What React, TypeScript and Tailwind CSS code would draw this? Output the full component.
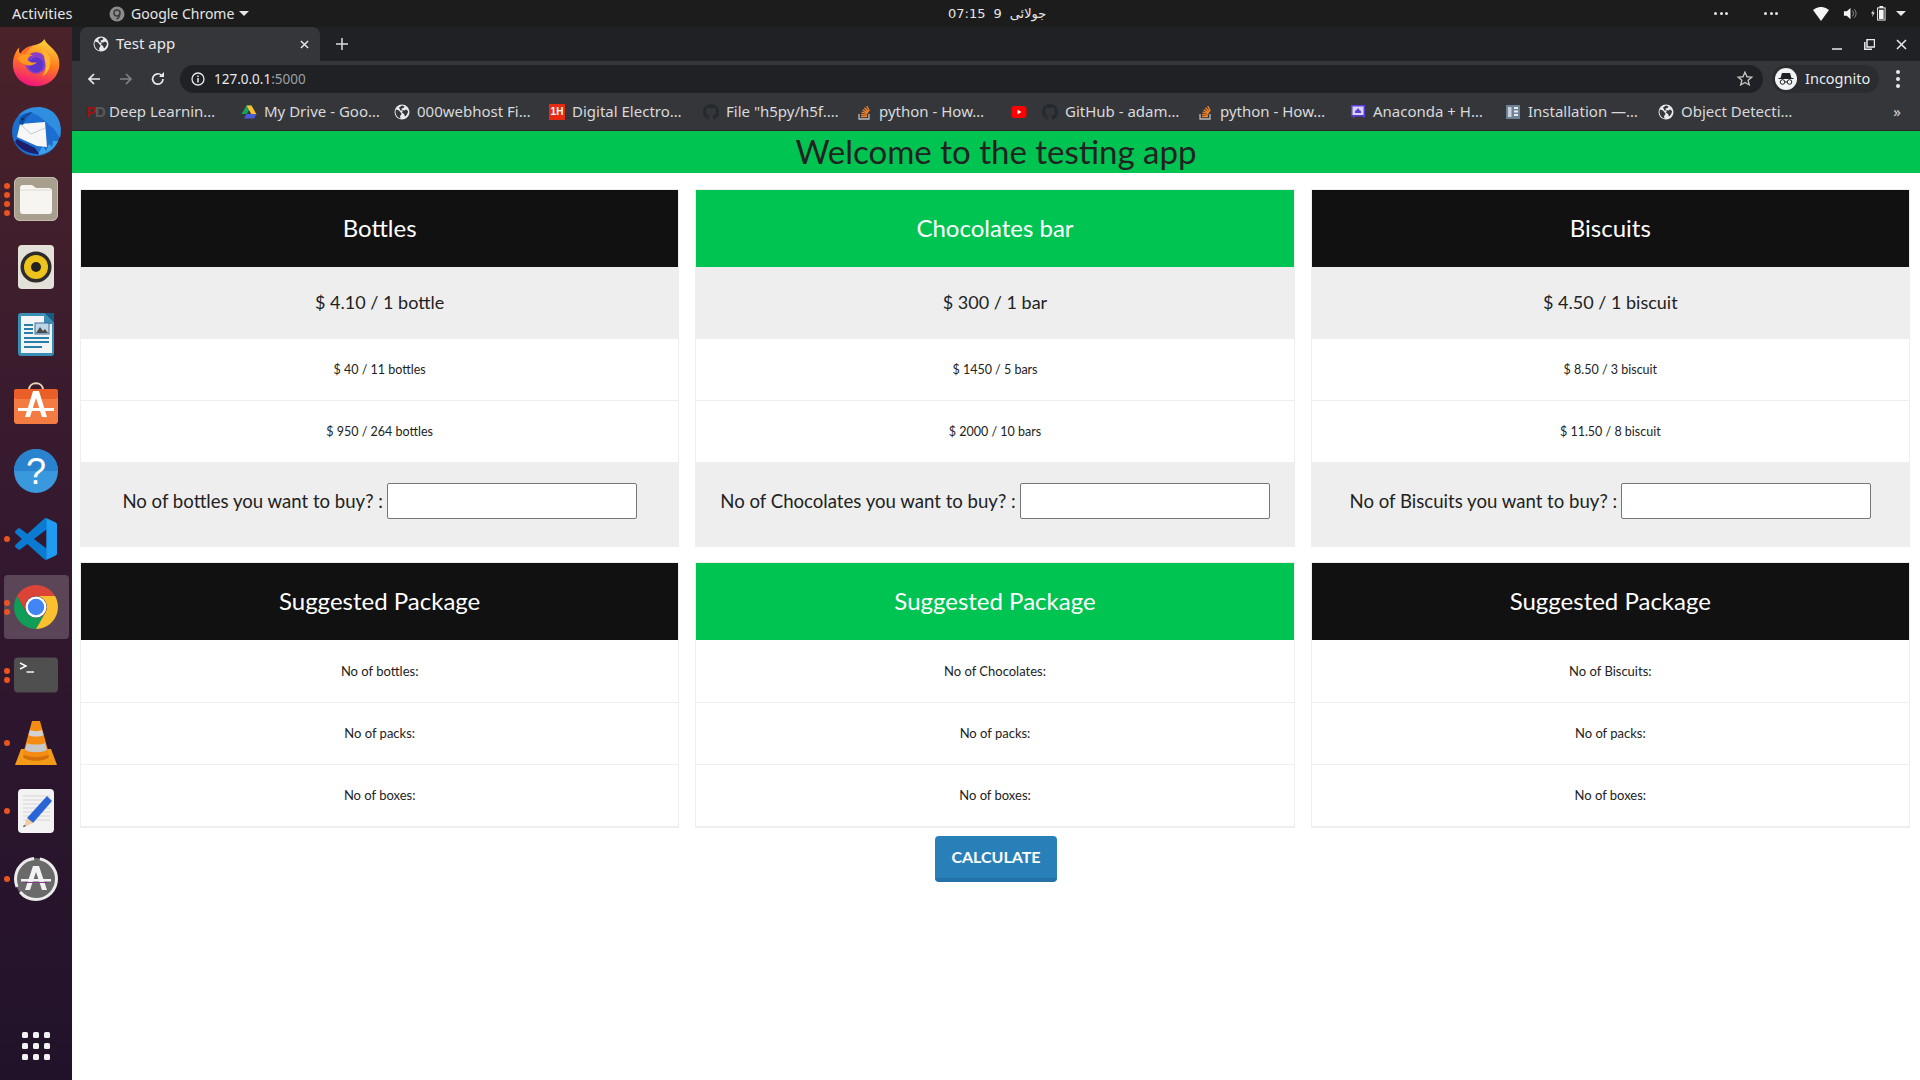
import React from "react";

const Dot = () => <span className="w-[6px] h-[6px] rounded-full bg-[#e95420]" />;

const Firefox = () => (
  <svg viewBox="0 0 54 54" className="w-[50px] h-[50px]">
    <defs>
      <linearGradient id="ff" x1="0.7" y1="0" x2="0.4" y2="1"><stop offset="0" stopColor="#ffd83a" /><stop offset="0.5" stopColor="#ff7a1f" /><stop offset="1" stopColor="#f2127f" /></linearGradient>
    </defs>
    <path d="M36 1c2 6 10 9 14 17 3 6 3 14 0 20-4 9-13 14-23 14C12 52 2 41 2 28 2 21 5 14 9 10c-1 4 0 6 1 7 3-5 8-8 14-9 5-1 10-3 12-7z" fill="url(#ff)" />
    <circle cx="27" cy="27" r="11.500" fill="#8a3fc8" />
    <circle cx="27" cy="29" r="8" fill="#5b35c8" />
    <path d="M7 22c4-5 12-6 17-3-3 0-6 2-6 5 2 3 8 3 10 2-2 3-8 5-12 3-4-1-7-4-9-7z" fill="#ff9a1f" />
    <path d="M33 12c7 3 11 11 9 18-1 6-5 10-9 12 4-4 5-10 4-15-1-6-2-11-4-15z" fill="#ffb62e" />
    <path d="M10 17c3-5 8-8 14-9-4 3-7 6-8 9z" fill="#ff6a2a" />
  </svg>
);
const Thunderbird = () => (
  <svg viewBox="0 0 54 54" className="w-[54px] h-[54px]">
    <circle cx="27" cy="28" r="24" fill="#1c6fd0" />
    <path d="M9 12c9-11 28-12 37-2 6 7 7 16 5 24l-6-9-15-13c-8-5-15-3-21 0z" fill="#2f8ee0" />
    <path d="M6 38c5 8 14 12 24 12l-4-6-18-9z" fill="#1d1f6a" />
    <path d="M30 48l4-6 3 5 3-7 3 3 1-6 5 0c-3 7-9 12-19 14z" fill="#3f9fe8" />
    <path d="M11 20l25-2 2 25-10-1-20-9z" fill="#f7f7f7" />
    <path d="M11 20l11 10 14-6" fill="none" stroke="#b9c0cc" strokeWidth="0.800" />
    <path d="M10 20c0-7 6-12 14-12l-7 6-3 7z" fill="#0f4f9e" />
    <circle cx="13.500" cy="15" r="1.200" fill="#082a5a" />
  </svg>
);
const Files = () => (
  <svg viewBox="0 0 54 54" className="w-[54px] h-[54px]">
    <rect x="5" y="5" width="44" height="44" rx="6" fill="#a89f8e" />
    <rect x="5.500" y="5.500" width="43" height="43" rx="5.500" fill="none" stroke="#c2bcae" />
    <path d="M11 16a3 3 0 0 1 3-3h9l4 3h13a3 3 0 0 1 3 3v20a3 3 0 0 1-3 3H14a3 3 0 0 1-3-3z" fill="#f6f5f2" />
    <path d="M11 18h32" stroke="#dedbd4" strokeWidth="1" />
  </svg>
);
const Rhythmbox = () => (
  <svg viewBox="0 0 54 54" className="w-[54px] h-[54px]">
    <rect x="9" y="5" width="36" height="44" rx="4" fill="#e4e1d8" />
    <circle cx="27" cy="27" r="15.500" fill="#2d2b2c" />
    <circle cx="27" cy="27" r="12" fill="#ecc41c" />
    <circle cx="27" cy="27" r="5" fill="#242221" />
  </svg>
);
const Writer = () => (
  <svg viewBox="0 0 54 54" className="w-[54px] h-[54px]">
    <path d="M12 5h24l9 9v31a3 3 0 0 1-3 3H12a3 3 0 0 1-3-3V8a3 3 0 0 1 3-3z" fill="#3a8db5" />
    <path d="M12 8h23v8h8v29H12z" fill="#f2f4f5" />
    <path d="M36 5h9v9z" fill="#175c85" />
    <path d="M15 16h9v2h-9zM15 20h9v2h-9zM15 24h9v2h-9zM15 29h25v2H15zM15 33h25v2H15zM15 38h18v2H15z" fill="#2a7fa8" />
    <rect x="26" y="15" width="14" height="11" fill="#bcd6e6" stroke="#3a6d99" strokeWidth="1" />
    <path d="M27 25l4-6 3 4 2-2 3 4z" fill="#4a4a4a" />
  </svg>
);
const Software = () => (
  <svg viewBox="0 0 54 54" className="w-[54px] h-[54px]">
    <path d="M20 14c0-9 14-9 14 0" fill="none" stroke="#e8d6b8" strokeWidth="2" />
    <rect x="5" y="13" width="44" height="35" rx="3" fill="#f47b42" />
    <rect x="5" y="13" width="44" height="10" rx="3" fill="#ea5e27" />
    <path d="M24 15h6l8 26h-5l-6-19-6 19h-5z" fill="#ffffff" />
    <path d="M9 32h36v3H9z" fill="#ffffff" />
  </svg>
);
const Help = () => (
  <svg viewBox="0 0 54 54" className="w-[54px] h-[54px]">
    <circle cx="27" cy="27" r="22" fill="#3a98dd" />
    <path d="M5 27a22 22 0 0 1 44 0z" fill="#2a83cf" />
    <text x="27" y="40" textAnchor="middle" fill="#fff" fontSize="36" fontFamily="'Liberation Sans',sans-serif">?</text>
  </svg>
);
const VSCode = () => (
  <svg viewBox="0 0 100 100" className="w-[42px] h-[42px]">
    <path d="M96.500 10.800L75.900.9c-2.400-1.200-5.200-.7-7.100 1.200L29.400 38 12.200 25c-1.600-1.200-3.800-1.100-5.300.2L1.400 30.300c-1.800 1.600-1.800 4.500 0 6.100L16.300 50 1.400 63.600c-1.800 1.600-1.800 4.500 0 6.100l5.500 5c1.500 1.400 3.700 1.500 5.300.3l17.200-13.100 39.400 35.900c1.900 1.900 4.800 2.400 7.100 1.200l20.600-9.900c2.200-1 3.500-3.100 3.500-5.400V16.200c0-2.300-1.300-4.400-3.500-5.400zM75 72.700L45.100 50 75 27.300z" fill="#0a7bd0" />
    <path d="M75 .6L96.500 10.800Q100 12.500 100 16.200V83.800Q100 87.500 96.500 89.200L75 99.400z" fill="#1f9cf0" />
  </svg>
);
const ChromeIcon = () => (
  <svg viewBox="0 0 54 54" className="w-[54px] h-[54px]">
    <path d="M8 16A22 22 0 0 1 46 16H27A11 11 0 0 0 17.500 32.500Z" fill="#db4437" />
    <path d="M8 16A22 22 0 0 0 27 49L36.500 32.500A11 11 0 0 1 17.500 32.500Z" fill="#0f9d58" />
    <path d="M27 49A22 22 0 0 0 46 16H27A11 11 0 0 1 36.500 32.500Z" fill="#fbc02d" />
    <circle cx="27" cy="27" r="10.500" fill="#fff" />
    <circle cx="27" cy="27" r="8.200" fill="#4285f4" />
  </svg>
);
const Terminal = () => (
  <svg viewBox="0 0 54 54" className="w-[54px] h-[54px]">
    <rect x="5" y="9.500" width="44" height="35" rx="4" fill="#4f4f4f" />
    <path d="M11 15l6 3-6 3" fill="none" stroke="#fff" strokeWidth="1.400" />
    <path d="M17.500 24h7.500" stroke="#fff" strokeWidth="1.400" />
  </svg>
);
const VLC = () => (
  <svg viewBox="0 0 54 54" className="w-[54px] h-[54px]">
    <path d="M6 49l6-16h30l6 16z" fill="#f39b16" />
    <path d="M14 41c4 5 22 5 26 0l-3-8H17z" fill="#d66e0a" />
    <path d="M23 5h8l9 33c-4 4-22 4-26 0z" fill="#f48c13" />
    <path d="M21 14c3 1.500 9 1.500 12 0l1.500 5c-4 2-11 2-15 0z" fill="#d2d2d2" />
    <path d="M18 27c4 2 14 2 18 0l2 7c-5 3-17 3-22 0z" fill="#c7c7c7" />
  </svg>
);
const Editor = () => (
  <svg viewBox="0 0 54 54" className="w-[54px] h-[54px]">
    <rect x="9" y="5" width="36" height="44" rx="4" fill="#f3f3f3" />
    <path d="M14 12h27M14 16h27M14 20h27M14 24h27M14 28h27M14 32h27M14 36h27" stroke="#d5d5d5" strokeWidth="1" />
    <path d="M38 12l5 5-19 22-6-5z" fill="#2a65d8" />
    <path d="M18 34l6 5-9 4z" fill="#f0c9a5" />
    <path d="M15 41l2 1-3 1z" fill="#333" />
  </svg>
);
const Updater = () => (
  <svg viewBox="0 0 54 54" className="w-[54px] h-[54px]">
    <circle cx="27" cy="27" r="21" fill="#6a6a6a" />
    <circle cx="27" cy="27" r="20.500" fill="none" stroke="#ececec" strokeWidth="3" strokeDasharray="50 6 38 6" />
    <path d="M24 14h6l8 24h-5l-6-18-6 18h-5z" fill="#f2f2f2" />
    <path d="M12 27h30v2.500H12z" fill="#f2f2f2" />
    <path d="M14 30h26v1H14z" fill="#7c3a8a" />
  </svg>
);
const Grid = () => (
  <svg viewBox="0 0 32 32" className="w-[32px] h-[32px]">
    {[3, 14, 25].map((y) => [3, 14, 25].map((x) => <rect key={`${x}-${y}`} x={x - 1} y={y - 1} width="6" height="6" rx="1.500" fill="#f2f2f2" />))}
  </svg>
);

const dock = [
  { icon: <Firefox />, dots: 0 },
  { icon: <Thunderbird />, dots: 0 },
  { icon: <Files />, dots: 4 },
  { icon: <Rhythmbox />, dots: 0 },
  { icon: <Writer />, dots: 0 },
  { icon: <Software />, dots: 0 },
  { icon: <Help />, dots: 0 },
  { icon: <VSCode />, dots: 1 },
  { icon: <ChromeIcon />, dots: 2, active: true },
  { icon: <Terminal />, dots: 2 },
  { icon: <VLC />, dots: 1 },
  { icon: <Editor />, dots: 1 },
  { icon: <Updater />, dots: 1 },
];

const Dock = () => (
  <aside className="w-[72px] shrink-0 flex flex-col pt-[2px] bg-gradient-to-b from-[#4a2229] via-[#33182f] to-[#21122a]">
    {dock.map((d, i) => (
      <div key={i} className="h-[68px] flex items-center justify-center relative">
        {d.active && <div className="absolute left-[4px] top-[2px] w-[65px] h-[64px] rounded-[4px] bg-white/20" />}
        <div className="absolute left-[4px] top-0 h-full flex flex-col justify-center gap-[3px]">
          {Array.from({ length: d.dots }).map((_, j) => <Dot key={j} />)}
        </div>
        <div className="relative flex items-center justify-center">{d.icon}</div>
      </div>
    ))}
    <div className="mt-auto h-[68px] flex items-center justify-center"><Grid /></div>
  </aside>
);

const Globe = ({ c = "#e8eaed", bg = "#35363a" }: { c?: string; bg?: string }) => (
  <svg viewBox="0 0 16 16" className="w-[16px] h-[16px] shrink-0">
    <circle cx="8" cy="8" r="7.500" fill={c} />
    <path d="M2 5.500l3 1 1.500 2 1 .5-.5 2-1 1 .5 2.500C4 14 1.500 11 1.500 8c0-1 .2-1.800.5-2.500zM8 1.500l2.500 1-1 1.500-2 .5.500 1.500 2.500.5 1.500-1 2 1.500c0 2.500-1.500 4.500-3 5.500l-1-2.500-2-1.500 1-2L6.500 6.500 5 3.500z" fill={bg} />
  </svg>
);
const GitHub = () => (
  <svg viewBox="0 0 16 16" className="w-[16px] h-[16px] shrink-0">
    <path fill="#24292e" d="M8 0C3.580 0 0 3.580 0 8c0 3.540 2.290 6.530 5.470 7.590.4.070.55-.17.55-.38 0-.19-.01-.82-.01-1.490-2.010.37-2.530-.49-2.690-.94-.09-.23-.48-.94-.82-1.130-.28-.15-.68-.52-.01-.53.63-.01 1.080.58 1.230.82.72 1.210 1.870.87 2.330.66.07-.52.28-.87.51-1.070-1.780-.2-3.640-.89-3.640-3.950 0-.87.31-1.590.82-2.150-.08-.2-.36-1.020.08-2.120 0 0 .67-.21 2.200.82.64-.18 1.320-.27 2-.27s1.360.09 2 .27c1.530-1.040 2.200-.82 2.200-.82.44 1.100.16 1.920.08 2.120.51.56.82 1.270.82 2.150 0 3.070-1.870 3.750-3.650 3.950.29.25.54.73.54 1.480 0 1.070-.01 1.930-.01 2.200 0 .21.15.46.55.38A8.010 8.010 0 0 0 16 8c0-4.420-3.580-8-8-8z" />
  </svg>
);
const SO = () => (
  <svg viewBox="0 0 16 16" className="w-[16px] h-[16px] shrink-0">
    <path d="M3 10v5h10v-5" fill="none" stroke="#bcbbbb" strokeWidth="1.300" />
    <path d="M5 12.500h6M5.100 10.400l6 .7M5.600 8.100l5.800 1.600M6.700 5.800l5.200 3M8.400 3.800l4.200 4.200M10.700 2l2.600 5" stroke="#f48024" strokeWidth="1.400" fill="none" />
  </svg>
);
const Drive = () => (
  <svg viewBox="0 0 16 16" className="w-[16px] h-[16px] shrink-0">
    <path d="M5.500 1.500h5L8 6 5.700 10H.5z" fill="#18a15f" />
    <path d="M5.500 1.500h5l5 9h-5z" fill="#fbc02d" />
    <path d="M3 14.500l2.600-4.500h10l-2.500 4.500z" fill="#4a5bd8" />
  </svg>
);
const PD = () => (
  <span className="w-[16px] shrink-0 text-[15px] leading-none font-bold font-['Liberation_Sans'] text-[#a01010] tracking-[-1px]">P<span className="text-[#5a5a5a]">D</span></span>
);
const OneH = () => (
  <span className="w-[16px] h-[16px] shrink-0 bg-[#e62b12] text-white text-[10px] font-bold leading-[16px] text-center font-['Liberation_Sans']">1H</span>
);
const YouTube = () => (
  <svg viewBox="0 0 16 16" className="w-[16px] h-[16px] shrink-0">
    <rect x="0.500" y="2" width="15" height="12" rx="3" fill="#f00" />
    <path d="M6.500 5.800v4.400L10.500 8z" fill="#fff" />
  </svg>
);
const Anaconda = () => (
  <svg viewBox="0 0 16 16" className="w-[16px] h-[16px] shrink-0">
    <path d="M1 1h14v13l-2-1.500H5L3 15v-2.500H1z" fill="#5a3fe0" />
    <rect x="2.500" y="2.500" width="11" height="8.500" fill="#d8d3f7" />
    <path d="M5 9V7l1.500-1L8 4l1.500 2L11 7v2z" fill="#5a3fe0" />
  </svg>
);
const Install = () => (
  <svg viewBox="0 0 16 16" className="w-[16px] h-[16px] shrink-0">
    <rect x="1" y="1" width="14" height="14" fill="#6e8296" />
    <rect x="3" y="3" width="3.500" height="10" fill="#c9d2da" />
    <path d="M9 3h4v2H9zM9 6.500h4v2H9zM9 10h4v2H9z" fill="#e7ecef" />
  </svg>
);

const bookmarks = [
  { icon: <PD />, t: "Deep Learnin…", w: "w-[155px]" },
  { icon: <Drive />, t: "My Drive - Goo…", w: "w-[153px]" },
  { icon: <Globe />, t: "000webhost Fi…", w: "w-[155px]" },
  { icon: <OneH />, t: "Digital Electro…", w: "w-[154px]" },
  { icon: <GitHub />, t: "File \"h5py/h5f.…", w: "w-[153px]" },
  { icon: <SO />, t: "python - How…", w: "w-[155px]" },
  { icon: <YouTube />, t: "", w: "w-[31px]" },
  { icon: <GitHub />, t: "GitHub - adam…", w: "w-[155px]" },
  { icon: <SO />, t: "python - How…", w: "w-[153px]" },
  { icon: <Anaconda />, t: "Anaconda + H…", w: "w-[155px]" },
  { icon: <Install />, t: "Installation —…", w: "w-[153px]" },
  { icon: <Globe />, t: "Object Detecti…", w: "w-[155px]" },
];

const TopBar = () => (
  <header className="h-[27px] shrink-0 bg-[#1c1c1c] text-[#e6e6e6] text-[14px] flex items-center font-['Noto_Sans'] relative">
    <span className="ml-[12px] w-[97px] text-[14.500px]">Activities</span>
    <svg viewBox="0 0 16 16" className="w-[16px] h-[16px] mr-[6px]"><circle cx="8" cy="8" r="7.500" fill="#8b8b8b" /><circle cx="8" cy="7" r="3" fill="none" stroke="#3a3a3a" strokeWidth="1.500" /><path d="M10.500 8c0 3-1.500 4.500-3 5" stroke="#3a3a3a" strokeWidth="1.500" fill="none" /></svg>
    <span className="text-[14px]">Google Chrome</span>
    <span className="ml-[5px] w-0 h-0 border-x-[5px] border-x-transparent border-t-[5px] border-t-[#e6e6e6]" />
    <div className="absolute left-[948px] top-0 h-full flex items-center gap-[8px] font-['DejaVu_Sans'] text-[13px]">
      <span>07:15</span><span>9</span><span>جولائی</span>
    </div>
    <div className="ml-auto flex items-center">
      <span className="w-[14px] flex justify-between"><i className="w-[3px] h-[3px] rounded-full bg-[#e6e6e6]" /><i className="w-[3px] h-[3px] rounded-full bg-[#e6e6e6]" /><i className="w-[3px] h-[3px] rounded-full bg-[#e6e6e6]" /></span>
      <span className="ml-[36px] w-[14px] flex justify-between"><i className="w-[3px] h-[3px] rounded-full bg-[#e6e6e6]" /><i className="w-[3px] h-[3px] rounded-full bg-[#e6e6e6]" /><i className="w-[3px] h-[3px] rounded-full bg-[#e6e6e6]" /></span>
      <svg viewBox="0 0 16 14" className="ml-[35px] w-[16px] h-[14px]"><path d="M0 3a12 12 0 0 1 16 0L8 14z" fill="#f5f5f5" /></svg>
      <svg viewBox="0 0 16 16" className="ml-[14px] w-[15px] h-[15px]"><path d="M1 5.500h3L8 2v12L4 10.500H1z" fill="#f5f5f5" /><path d="M10 5c1.500 1.500 1.500 4.500 0 6M12 3.500c2.500 2.500 2.500 6.500 0 9" stroke="#9a9a9a" fill="none" /></svg>
      <svg viewBox="0 0 16 18" className="ml-[13px] w-[15px] h-[17px]"><path d="M3 5L0 9h2l-1 4 3-5H2z" fill="#f5f5f5" /><rect x="7" y="3" width="8" height="13" fill="none" stroke="#f5f5f5" /><rect x="9" y="1" width="4" height="2" fill="#f5f5f5" /><rect x="8.500" y="5" width="5" height="10" fill="#f5f5f5" /></svg>
      <span className="ml-[10px] mr-[14px] w-0 h-0 border-x-[5px] border-x-transparent border-t-[5px] border-t-[#e6e6e6]" />
    </div>
  </header>
);

const Chrome = () => (
  <div className="shrink-0 font-['Noto_Sans']">
    <div className="h-[34px] bg-[#202124] flex items-end pl-[8px] text-[#e8eaed]">
      <div className="w-[240px] h-[34px] bg-[#35363a] rounded-t-[8px] flex items-center pl-[13px] pr-[11px] text-[15px]">
        <Globe />
        <span className="ml-[7px] pb-[2px]">Test app</span>
        <svg viewBox="0 0 10 10" className="ml-auto w-[9px] h-[9px]"><path d="M1 1l8 8M9 1l-8 8" stroke="#e8eaed" strokeWidth="1.600" /></svg>
      </div>
      <svg viewBox="0 0 12 12" className="ml-[16px] mb-[11px] w-[12px] h-[12px]"><path d="M6 0v12M0 6h12" stroke="#dadce0" strokeWidth="1.500" /></svg>
      <div className="ml-auto mr-[13px] mb-[11px] flex items-center gap-[21px]">
        <svg viewBox="0 0 11 11" className="w-[11px] h-[11px]"><path d="M0 10h10" stroke="#e8eaed" strokeWidth="1.500" /></svg>
        <svg viewBox="0 0 11 11" className="w-[11px] h-[11px]"><path d="M3 .5h7.500V8H3z" fill="none" stroke="#e8eaed" strokeWidth="1.500" /><path d="M.8 3v7.200H8" fill="none" stroke="#e8eaed" strokeWidth="1.500" /></svg>
        <svg viewBox="0 0 11 11" className="w-[11px] h-[11px]"><path d="M1 1l9 9M10 1l-9 9" stroke="#e8eaed" strokeWidth="1.500" /></svg>
      </div>
    </div>
    <div className="h-[32px] bg-[#35363a] flex items-end">
      <div className="w-[108px] h-[28px] flex items-center pl-[14px] gap-[16px]">
        <svg viewBox="0 0 16 16" className="w-[16px] h-[16px]"><path d="M14 8H3M8 3L3 8l5 5" fill="none" stroke="#e8eaed" strokeWidth="1.700" /></svg>
        <svg viewBox="0 0 16 16" className="w-[16px] h-[16px]"><path d="M2 8h11M8 3l5 5-5 5" fill="none" stroke="#7f8184" strokeWidth="1.700" /></svg>
        <svg viewBox="0 0 16 16" className="w-[16px] h-[16px]"><path d="M13 8a5.200 5.200 0 1 1-1.500-3.700" fill="none" stroke="#e8eaed" strokeWidth="1.700" /><path d="M14 1v5H9z" fill="#e8eaed" /></svg>
      </div>
      <div className="w-[1583px] h-[28px] rounded-full bg-[#202124] flex items-center pl-[11px] pr-[9px] text-[13.500px] text-[#e8eaed]">
        <svg viewBox="0 0 14 14" className="w-[14px] h-[14px]"><circle cx="7" cy="7" r="6" fill="none" stroke="#e8eaed" strokeWidth="1.300" /><path d="M7 6v4.500M7 3.500v1.500" stroke="#e8eaed" strokeWidth="1.500" /></svg>
        <span className="ml-[9px]">127.0.0.1<span className="text-[#9aa0a6]">:5000</span></span>
        <svg viewBox="0 0 24 24" className="ml-auto w-[18px] h-[18px]"><path d="M12 3l2.700 6 6.300.6-4.800 4.200 1.500 6.200L12 16.700 6.300 20l1.500-6.200L3 9.600 9.300 9z" fill="none" stroke="#c4c7c5" strokeWidth="1.800" /></svg>
      </div>
      <div className="ml-[9px] w-[107px] h-[28px] rounded-full bg-[#2b2c30] flex items-center pl-[3px] text-[14.500px] text-[#e8eaed]">
        <svg viewBox="0 0 22 22" className="w-[22px] h-[22px]"><circle cx="11" cy="11" r="11" fill="#f1f3f4" /><path d="M7 5h8l1.500 5h-11z" fill="#202124" /><path d="M3.500 10.500h15" stroke="#202124" /><circle cx="7.500" cy="14" r="2.300" fill="none" stroke="#202124" /><circle cx="14.500" cy="14" r="2.300" fill="none" stroke="#202124" /><path d="M10 14h2" stroke="#202124" /></svg>
        <span className="ml-[8px]">Incognito</span>
      </div>
      <div className="ml-[17px] h-[28px] flex flex-col justify-center gap-[3px]">
        <i className="w-[4px] h-[4px] rounded-full bg-[#e8eaed]" /><i className="w-[4px] h-[4px] rounded-full bg-[#e8eaed]" /><i className="w-[4px] h-[4px] rounded-full bg-[#e8eaed]" />
      </div>
    </div>
    <div className="h-[38px] bg-[#35363a] border-b border-b-[#28292c] flex items-center pl-[14px] text-[15px] text-[#d8dadd]">
      {bookmarks.map((b, i) => (
        <div key={i} className={`${b.w} shrink-0 flex items-center gap-[7px] whitespace-nowrap`}>
          {b.icon}
          {b.t && <span>{b.t}</span>}
        </div>
      ))}
      <span className="ml-auto mr-[19px] text-[15px] leading-none">»</span>
    </div>
  </div>
);

type CardData = {
  head: string;
  green: boolean;
  price: string;
  rows: string[];
  label: string;
  count: string;
};

const cards: CardData[] = [
  { head: "Bottles", green: false, price: "$ 4.10 / 1 bottle", rows: ["$ 40 / 11 bottles", "$ 950 / 264 bottles"], label: "No of bottles you want to buy? :", count: "No of bottles:" },
  { head: "Chocolates bar", green: true, price: "$ 300 / 1 bar", rows: ["$ 1450 / 5 bars", "$ 2000 / 10 bars"], label: "No of Chocolates you want to buy? :", count: "No of Chocolates:" },
  { head: "Biscuits", green: false, price: "$ 4.50 / 1 biscuit", rows: ["$ 8.50 / 3 biscuit", "$ 11.50 / 8 biscuit"], label: "No of Biscuits you want to buy? :", count: "No of Biscuits:" },
];

const Head = ({ green, children }: { green: boolean; children: React.ReactNode }) => (
  <div className={`h-[77px] flex items-center justify-center pb-[2px] text-white text-[24px] ${green ? "bg-[#00c452]" : "bg-[#111111]"}`}>{children}</div>
);

const Row = ({ children, h }: { children: React.ReactNode; h: string }) => (
  <div className={`${h} flex items-center justify-center pt-[1px] border-b-[#eeeeee]`}>{children}</div>
);

const Page = () => (
  <main className="flex-1 bg-white text-[#222222] font-['Lato'] flex flex-col min-h-0">
    <div className="h-[42px] bg-[#00c452] flex items-center justify-center pb-[2px] text-[33px] leading-none text-[#222222]">Welcome to the testing app</div>
    <div className="grid grid-cols-3 gap-x-[16px] pl-[8px] pr-[10px] pt-[16px]">
      {cards.map((c) => (
        <div key={c.head} className="border border-[#eeeeee]">
          <Head green={c.green}>{c.head}</Head>
          <div className="h-[72px] bg-[#eeeeee] flex items-center justify-center pb-[1px] text-[18px]">{c.price}</div>
          <Row h="h-[62px] border-b text-[12.500px]">{c.rows[0]}</Row>
          <Row h="h-[61px] text-[12.500px]">{c.rows[1]}</Row>
          <div className="h-[84px] bg-[#eeeeee] flex items-center justify-center gap-[4px] pb-[6px] text-[18.600px]">
            <span className="mt-[2px]">{c.label}</span>
            <input className="w-[250px] h-[36px] bg-white border border-[#767676] rounded-[2px]" />
          </div>
        </div>
      ))}
    </div>
    <div className="grid grid-cols-3 gap-x-[16px] pl-[8px] pr-[10px] pt-[15px]">
      {cards.map((c) => (
        <div key={c.head} className="border border-[#eeeeee] border-b-2">
          <Head green={c.green}>Suggested Package</Head>
          <Row h="h-[63px] border-b text-[13px]">{c.count}</Row>
          <Row h="h-[62px] border-b text-[13px]">No of packs:</Row>
          <Row h="h-[61px] text-[13px]">No of boxes:</Row>
        </div>
      ))}
    </div>
    <div className="flex justify-center pt-[8px]">
      <button className="w-[122px] h-[46px] rounded-[4px] bg-[#2980b9] border-b-4 border-b-[#2472a8] text-white font-bold text-[16px]">CALCULATE</button>
    </div>
  </main>
);

export default function App() {
  return (
    <div className="w-[1920px] h-[1080px] overflow-hidden flex flex-col bg-white">
      <TopBar />
      <div className="flex-1 flex min-h-0">
        <Dock />
        <div className="flex-1 flex flex-col min-w-0">
          <Chrome />
          <Page />
        </div>
      </div>
    </div>
  );
}
